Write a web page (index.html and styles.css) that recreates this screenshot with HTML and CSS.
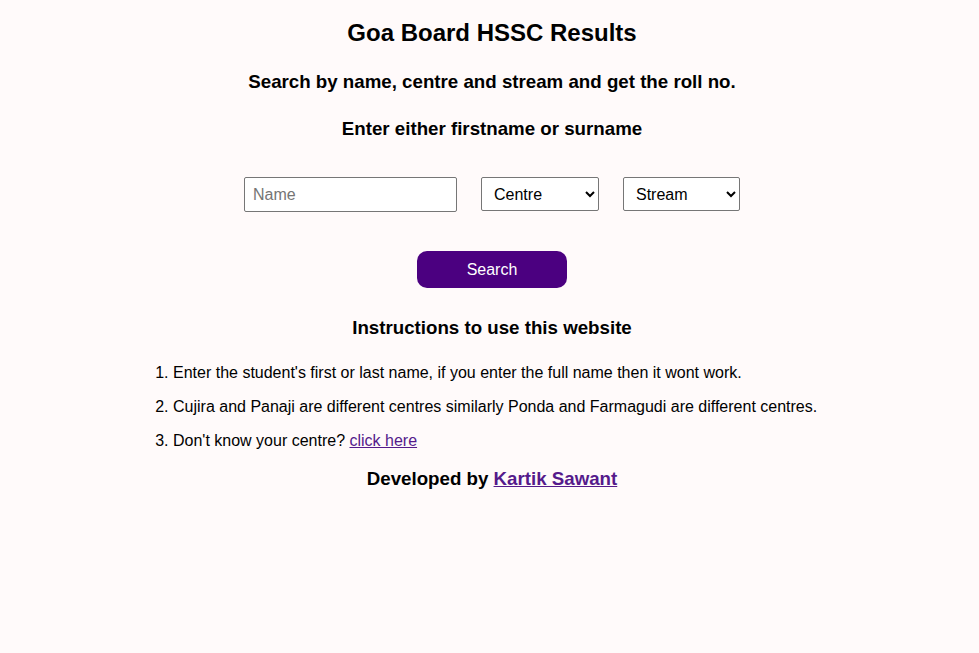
FILE: index.html
```html
<!DOCTYPE html>
<html>
<head>
<meta charset="utf-8">
<title>Goa Board HSSC Results</title>
<link rel="stylesheet" href="styles.css">
</head>
<body>
<main class="page">
  <h1 class="title">Goa Board HSSC Results</h1>
  <h3 class="sub sub-first">Search by name, centre and stream and get the roll no.</h3>
  <h3 class="sub sub-second">Enter either firstname or surname</h3>
  <form class="search-form">
    <div class="fields">
      <input class="name-input" type="text" placeholder="Name">
      <select class="select select-centre"><option>Centre</option></select>
      <select class="select select-stream"><option>Stream</option></select>
    </div>
    <button class="search-btn" type="button">Search</button>
  </form>
  <h3 class="sub instr-title">Instructions to use this website</h3>
  <ol class="instructions">
    <li>Enter the student's first or last name, if you enter the full name then it wont work.</li>
    <li>Cujira and Panaji are different centres similarly Ponda and Farmagudi are different centres.</li>
    <li>Don't know your centre? <a class="link" href="#">click here</a></li>
  </ol>
  <h3 class="sub developed">Developed by <a class="link" href="#">Kartik Sawant</a></h3>
</main>
</body>
</html>
```
FILE: styles.css
```css
html, body {
  margin: 0;
  padding: 0;
  background: #fffafa;
}
body {
  font-family: "Liberation Sans", Arial, sans-serif;
  color: #000;
}
.page {
  display: flex;
  flex-direction: column;
  align-items: center;
  padding-left: 5px;
}
.title {
  font-size: 24px;
  line-height: 28px;
  font-weight: bold;
  margin: 19px 0 0;
}
.sub {
  font-size: 18.72px;
  line-height: 22px;
  font-weight: bold;
  margin: 0;
}
.sub-first { margin-top: 24px; }
.sub-second { margin-top: 25px; }
.search-form {
  display: flex;
  flex-direction: column;
  align-items: center;
  margin-top: 37px;
}
.fields {
  display: flex;
  gap: 24px;
  align-items: flex-start;
}
.name-input {
  box-sizing: border-box;
  width: 213px;
  height: 35px;
  border: 1px solid #767676;
  border-radius: 2px;
  padding: 0 8px;
  font-family: "Liberation Sans", Arial, sans-serif;
  font-size: 16px;
  background: #fff;
  color: #000;
}
.name-input::placeholder { color: #757575; }
.select {
  box-sizing: border-box;
  height: 34px;
  border: 1px solid #767676;
  border-radius: 2px;
  padding: 0 6px 0 8px;
  font-family: "Liberation Sans", Arial, sans-serif;
  font-size: 16px;
  background: #fff;
  color: #000;
}
.select-centre { width: 118px; }
.select-stream { width: 117px; }
.search-btn {
  margin-top: 39px;
  width: 150px;
  height: 37px;
  border: none;
  border-radius: 10px;
  background: #4b0080;
  color: #fff;
  font-family: "Liberation Sans", Arial, sans-serif;
  font-size: 16px;
}
.instr-title { margin-top: 29px; }
.instructions {
  box-sizing: border-box;
  width: 713px;
  margin: 17px 0 0;
  padding-left: 37.5px;
  font-size: 16px;
  line-height: 34px;
}
.link { color: #551a8b; }
.developed { margin-top: 10px; }
```
